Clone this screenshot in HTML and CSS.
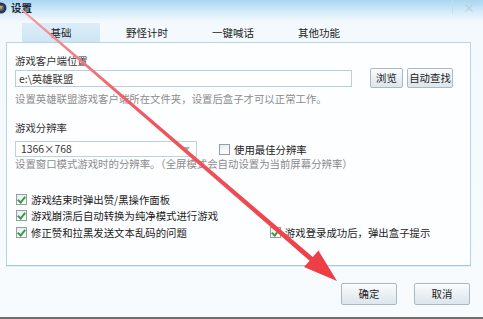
FILE: index.html
```html
<!DOCTYPE html>
<html lang="zh">
<head>
<meta charset="utf-8">
<title>设置</title>
<link rel="stylesheet" href="styles.css">
</head>
<body>
<div class="window">
  <div class="titlebar">
    <svg class="app-icon" width="9" height="14" viewBox="0 0 9 14">
      <circle cx="3" cy="7" r="5.5" fill="#2b3550"/>
      <circle cx="3" cy="7" r="3" fill="#4d5e80"/>
      <path d="M1 5 L5 5 L3 9 Z" fill="#c9a54a"/>
    </svg>
    <span class="title">设置</span>
    <span class="spacer"></span>
    <span class="sep"></span>
    <span class="close">×</span>
  </div>
  <div class="tabs">
    <div class="tab active"><span>基础</span></div>
    <div class="tab"><span>野怪计时</span></div>
    <div class="tab"><span>一键喊话</span></div>
    <div class="tab"><span>其他功能</span></div>
  </div>
  <div class="panel">
    <div class="label">游戏客户端位置</div>
    <div class="path-row">
      <div class="input">e:\英雄联盟</div>
      <button class="btn btn-browse">浏览</button>
      <button class="btn btn-find">自动查找</button>
    </div>
    <div class="desc desc-1">设置英雄联盟游戏客户端所在文件夹，设置后盒子才可以正常工作。</div>
    <div class="label label-2">游戏分辨率</div>
    <div class="res-row">
      <div class="select"><span>1366×768</span><span class="caret"></span></div>
      <label class="check"><span class="box"></span><span>使用最佳分辨率</span></label>
    </div>
    <div class="desc desc-2">设置窗口模式游戏时的分辨率。（全屏模式会自动设置为当前屏幕分辨率）</div>
    <div class="options">
      <label class="check"><span class="box checked"></span><span>游戏结束时弹出赞/黑操作面板</span></label>
      <label class="check"><span class="box checked"></span><span>游戏崩溃后自动转换为纯净模式进行游戏</span></label>
      <div class="opt-row">
        <label class="check"><span class="box checked"></span><span>修正赞和拉黑发送文本乱码的问题</span></label>
        <label class="check check-right"><span class="box checked"></span><span>游戏登录成功后，弹出盒子提示</span></label>
      </div>
    </div>
  </div>
  <div class="footer">
    <button class="btn btn-dlg">确定</button>
    <button class="btn btn-dlg">取消</button>
  </div>
  <svg class="arrow" width="483" height="319" viewBox="0 0 483 319">
    <defs>
      <linearGradient id="ag" x1="22" y1="10" x2="337" y2="281" gradientUnits="userSpaceOnUse">
        <stop offset="0" stop-color="#f2a0a4"/>
        <stop offset="0.35" stop-color="#ef5a60"/>
        <stop offset="1" stop-color="#ee3c43"/>
      </linearGradient>
    </defs>
    <polygon fill="url(#ag)" points="22.7,9.2 312.8,256.9 318.4,250.5 337,281 304,267.1 309.6,260.7 21.3,10.8"/>
  </svg>
</div>
</body>
</html>
```
FILE: styles.css
```css
* { box-sizing: border-box; }
body {
  margin: 0;
  font-family: "Noto Sans CJK SC", "Noto Sans", sans-serif;
  font-size: 10.4px;
  color: #333;
}
.window {
  position: relative;
  width: 483px;
  height: 319px;
  overflow: hidden;
  background: linear-gradient(#a8d6f1 0, #d6ecf8 12px, #f3f9fd 22px, #f7fbfd 100%);
  border-bottom: 2px solid #6e6e6e;
}
.titlebar {
  display: flex;
  align-items: center;
  height: 22px;
  padding-bottom: 6px;
}
.app-icon { margin-left: -2px; }
.title {
  margin-left: 4px;
  font-weight: bold;
  font-size: 10.5px;
  line-height: 14px;
  color: #1d2a38;
}
.spacer { flex: 1; }
.sep {
  width: 1px;
  height: 16px;
  margin-top: -4px;
  background: #c8dbe6;
}
.close {
  margin: 0 8px 0 10px;
  font-size: 12px;
  line-height: 14px;
  color: #b8cad6;
}
.tabs {
  display: flex;
  height: 20px;
  padding-left: 18px;
}
.tab {
  width: 86px;
  padding: 1px 4px 0;
  display: flex;
}
.tab span {
  flex: 1;
  text-align: center;
  line-height: 19px;
  font-size: 10.5px;
  color: #222;
}
.tab.active span { background: linear-gradient(#dcedf8, #cfe5f4); }
.panel {
  margin: 0 12px 0 6px;
  height: 224px;
  background: #fdfeff;
  border: 1px solid #b9d3e0;
  border-bottom-color: #a5c9dd;
  padding: 11px 0 0 8px;
  box-shadow: 0 1px 0 #e4eff5;
}
.label { line-height: 14px; color: #333; }
.path-row {
  display: flex;
  align-items: center;
  height: 20px;
}
.input {
  width: 337px;
  height: 17px;
  border: 1px solid #b8d0de;
  background: #fff;
  padding-left: 3px;
  line-height: 15px;
  color: #333;
}
.btn {
  font-family: inherit;
  font-size: 10.4px;
  color: #222;
  border: 1px solid #a9bac6;
  border-radius: 2px;
  background: linear-gradient(#fbfcfd, #e9eff3 55%, #dde6ec);
  padding: 0;
  height: 20px;
  line-height: 18px;
}
.btn-browse { width: 33px; margin-left: 18px; }
.btn-find { width: 46px; margin-left: 4px; }
.desc { color: #8c8c8c; }
.desc-1 { line-height: 12px; margin-top: 5px; }
.label-2 { margin-top: 16px; }
.res-row {
  display: flex;
  align-items: center;
  height: 16px;
  margin-top: 6px;
}
.select {
  position: relative;
  width: 182px;
  height: 16px;
  border: 1px solid #bcd2df;
  background: #fff;
  padding-left: 5px;
  line-height: 14px;
  color: #333;
}
.caret {
  position: absolute;
  right: 6px;
  top: 5px;
  border-left: 3px solid transparent;
  border-right: 3px solid transparent;
  border-top: 4px solid #9bb0c0;
}
.res-row .check { margin-left: 21px; }
.desc-2 { line-height: 12px; margin-top: 1px; }
.options {
  margin-top: 21px;
  display: flex;
  flex-direction: column;
}
.check {
  display: flex;
  align-items: center;
  height: 16.5px;
  color: #222;
}
.box {
  width: 11px;
  height: 11px;
  margin: 0 4px 0 1px;
  border: 1px solid #8e9fac;
  background: linear-gradient(#e9eef2, #fff);
  position: relative;
}
.box.checked::after {
  content: "";
  position: absolute;
  left: 2px;
  top: 0px;
  width: 3px;
  height: 6px;
  border: solid #3f9b3f;
  border-width: 0 2px 2px 0;
  transform: rotate(40deg);
}
.opt-row { display: flex; }
.check-right { margin-left: 82px; }
.footer {
  display: flex;
  justify-content: flex-end;
  gap: 17px;
  padding: 17px 13px 0 0;
}
.btn-dlg { width: 56px; height: 22px; line-height: 20px; }
.arrow {
  position: absolute;
  left: 0;
  top: 0;
  pointer-events: none;
}
```
